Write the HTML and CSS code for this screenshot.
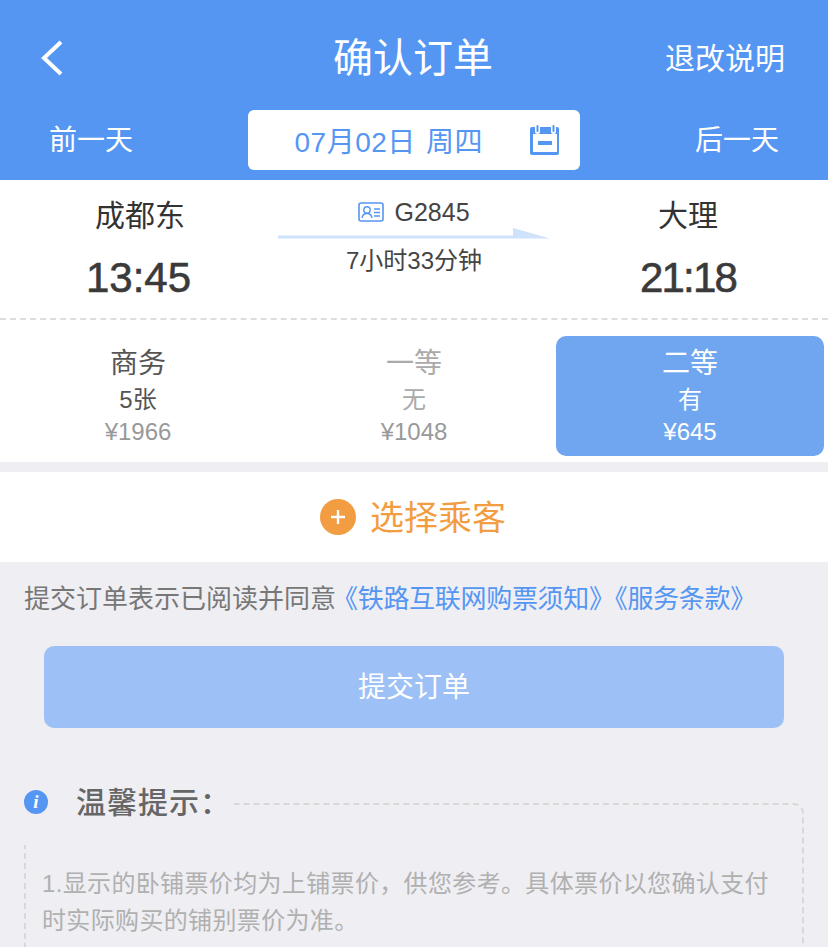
FILE: index.html
```html
<!DOCTYPE html>
<html lang="zh-CN">
<head>
<meta charset="UTF-8">
<meta name="viewport" content="width=device-width, initial-scale=1.0">
<title>确认订单</title>
<link rel="stylesheet" href="styles.css">
</head>
<body>
<div class="page">

<!-- 顶部 -->
<header class="top">
    <div class="title-row">
        <svg class="back" width="24" height="36" viewBox="0 0 24 36"><path d="M21 2 L4 18 L21 34" fill="none" stroke="#fff" stroke-width="4"/></svg>
        <h1>确认订单</h1>
        <span class="rule-link">退改说明</span>
    </div>
    <div class="date-row">
        <span class="day-link">前一天</span>
        <div class="date-box">
            <span class="date-text">07月02日 周四</span>
            <svg class="cal" width="32" height="32" viewBox="0 0 32 32">
                <path d="M4 3h24a2 2 0 0 1 2 2v24a2 2 0 0 1-2 2H3a2 2 0 0 1-2-2V5a2 2 0 0 1 2-2z" fill="#5596f3"/>
                <rect x="4" y="10" width="24" height="18" fill="#fff"/>
                <rect x="6" y="1" width="5" height="9" rx="2.5" fill="#fff"/>
                <rect x="22" y="1" width="5" height="9" rx="2.5" fill="#fff"/>
                <rect x="7.5" y="1" width="2" height="7" rx="1" fill="#5596f3"/>
                <rect x="23.5" y="1" width="2" height="7" rx="1" fill="#5596f3"/>
                <rect x="9" y="17" width="14" height="4" fill="#5596f3"/>
            </svg>
        </div>
        <span class="day-link">后一天</span>
    </div>
</header>

<!-- 车次 -->
<section class="route">
    <div class="stop">
        <div class="stop-name">成都东</div>
        <div class="stop-time stop-time-from">13:45</div>
    </div>
    <div class="train">
        <div class="train-no">
            <svg width="26" height="20" viewBox="0 0 26 20">
                <rect x="1" y="1" width="24" height="18" rx="2" fill="none" stroke="#5596f3" stroke-width="1.6"/>
                <circle cx="9" cy="8" r="3.2" fill="none" stroke="#5596f3" stroke-width="1.4"/>
                <path d="M4 16c.5-3 2.500-4.500 5-4.500s4.500 1.500 5 4.500" fill="none" stroke="#5596f3" stroke-width="1.4"/>
                <path d="M16 7h6M16 10.500h6M16 14h6" stroke="#5596f3" stroke-width="1.3"/>
            </svg>
            <span>G2845</span>
        </div>
        <svg class="arrow" width="272" height="11" viewBox="0 0 272 11"><path d="M0 7.500H235V0L272 10.500H0z" fill="#cfe2fb"/></svg>
        <div class="duration">7小时33分钟</div>
    </div>
    <div class="stop">
        <div class="stop-name">大理</div>
        <div class="stop-time stop-time-to">21:18</div>
    </div>
</section>

<!-- 席别 -->
<section class="seats">
    <div class="seat">
        <div class="seat-name">商务</div>
        <div class="seat-left">5张</div>
        <div class="seat-price">¥1966</div>
    </div>
    <div class="seat seat-none">
        <div class="seat-name">一等</div>
        <div class="seat-left">无</div>
        <div class="seat-price">¥1048</div>
    </div>
    <div class="seat seat-on">
        <div class="seat-name">二等</div>
        <div class="seat-left">有</div>
        <div class="seat-price">¥645</div>
    </div>
</section>

<section class="passenger">
    <svg width="36" height="36" viewBox="0 0 36 36">
        <circle cx="18" cy="18" r="18" fill="#f29d41"/>
        <path d="M18 11v14M11 18h14" stroke="#fff" stroke-width="2.400"/>
    </svg>
    <span>选择乘客</span>
</section>

<p class="agree">提交订单表示已阅读并同意<a>《铁路互联网购票须知》《服务条款》</a></p>

<div class="submit">提交订单</div>

<!-- 温馨提示 -->
<section class="tips">
    <div class="tips-head">
        <i class="info">i</i>
        <span>温馨提示：</span>
    </div>
    <div class="tips-box">
        <p>1.显示的卧铺票价均为上铺票价，供您参考。具体票价以您确认支付时实际购买的铺别票价为准。</p>
    </div>
</section>

</div>
</body>
</html>
```

FILE: styles.css
```css
* {
    box-sizing: border-box;
}
body {
    margin: 0;
    font-family: "Liberation Sans", "Noto Sans CJK SC", sans-serif;
    background: #eeeef3;
}
.page {
    height: 947px;
    overflow: hidden;
}

/* 顶部 */
.top {
    height: 180px;
    background: #5596f3;
    color: #fff;
}
.title-row {
    height: 110px;
    padding: 0 43px 0 40px;
    display: flex;
    align-items: center;
    justify-content: space-between;
    position: relative;
}
.title-row h1 {
    position: absolute;
    left: -1px;
    right: 1px;
    top: 35px;
    margin: 0;
    font-size: 40px;
    line-height: 46px;
    font-weight: 400;
    text-align: center;
}
.back {
    margin-top: 6px;
}
.rule-link {
    font-size: 30px;
    margin-top: 2px;
}
.date-row {
    display: flex;
    justify-content: space-between;
    align-items: flex-start;
    padding: 0 49px;
}
.day-link {
    font-size: 28px;
    line-height: 62px;
}
.date-box {
    width: 332px;
    height: 60px;
    margin: 0 0 0 -1px;
    padding: 0 19px 0 47px;
    background: #fff;
    border-radius: 6px;
    display: flex;
    align-items: center;
    justify-content: space-between;
}
.date-text {
    font-size: 28px;
    letter-spacing: 0.5px;
    word-spacing: 2px;
    color: #5596f3;
}

/* 车次 */
.route {
    height: 140px;
    display: grid;
    grid-template-columns: 280px 272px 272px;
    background: #fff;
    border-bottom: 2px dashed #ddd;
    text-align: center;
}
.stop-name {
    font-size: 30px;
    line-height: 40px;
    color: #333;
    margin-top: 16px;
}
.stop-time {
    font-size: 42px;
    line-height: 52px;
    -webkit-text-stroke: 0.6px #3a3a3a;
    color: #3a3a3a;
    margin-top: 16px;
}
.stop-time-from {
    padding-right: 3px;
}
.stop-time-to {
    letter-spacing: -1.8px;
}
.train {
    margin-left: -2px;
    margin-right: 2px;
}
.train-no {
    display: flex;
    justify-content: center;
    align-items: center;
    gap: 10px;
    height: 36px;
    margin-top: 14px;
    font-size: 25px;
    color: #444;
}
.arrow {
    display: block;
    margin-top: -2px;
    margin-bottom: 4px;
}
.duration {
    font-size: 24px;
    line-height: 36px;
    color: #444;
}

/* 席别 */
.seats {
    height: 142px;
    padding: 16px 4px 6px 0;
    display: grid;
    grid-template-columns: 276px 276px 272px;
    background: #fff;
    text-align: center;
}
.seat {
    border-radius: 10px;
    color: #555;
}
.seat-name {
    font-size: 28px;
    line-height: 36px;
    margin-top: 10px;
}
.seat-left {
    font-size: 24px;
    line-height: 34px;
    margin-top: 1px;
}
.seat-price {
    font-size: 24px;
    line-height: 30px;
    color: #999;
}
.seat-none,
.seat-none .seat-left {
    color: #aaa;
}
.seat-on {
    margin-left: 4px;
    background: #6fa6ef;
    color: #fff;
}
.seat-on .seat-price {
    color: #fff;
}

.passenger {
    height: 90px;
    margin-top: 10px;
    padding-right: 2px;
    background: #fff;
    display: flex;
    align-items: center;
    justify-content: center;
    gap: 14px;
    font-size: 34px;
    color: #f29d41;
}
.passenger span {
    margin-top: -3px;
}
.agree {
    margin: 0;
    padding: 19px 0 0 24px;
    font-size: 26px;
    line-height: 36px;
    color: #777;
    white-space: nowrap;
}
.agree a {
    margin-left: -4px;
    letter-spacing: -0.3px;
    color: #5596f3;
}
.submit {
    margin: 29px 44px 0;
    height: 82px;
    line-height: 84px;
    background: #9dc1f6;
    border-radius: 10px;
    color: #fff;
    font-size: 28px;
    text-align: center;
}

/* 温馨提示 */
.tips {
    position: relative;
    margin: 75px 24px 0;
}
.tips-head {
    position: absolute;
    left: 0;
    top: -24px;
    width: 210px;
    height: 66px;
    padding-top: 2px;
    background: #eeeef3;
    display: flex;
    align-items: flex-start;
    gap: 28px;
    font-size: 30px;
    line-height: 44px;
    font-weight: 500;
    letter-spacing: 1px;
    color: #666;
}
.info {
    flex-shrink: 0;
    width: 24px;
    height: 24px;
    margin-top: 9px;
    border-radius: 50%;
    background: #5596f3;
    color: #fff;
    font-family: "Liberation Serif", serif;
    font-size: 19px;
    font-weight: 700;
    line-height: 24px;
    letter-spacing: 0;
    text-align: center;
}
.tips-head span {
    white-space: nowrap;
}
.tips-box {
    height: 300px;
    border: 2px dashed #d8d8d8;
    border-radius: 10px;
    padding: 60px 20px 0 16px;
}
.tips-box p {
    margin: 0;
    font-size: 24px;
    line-height: 37px;
    letter-spacing: 0.35px;
    color: #b0b0b0;
}
```
